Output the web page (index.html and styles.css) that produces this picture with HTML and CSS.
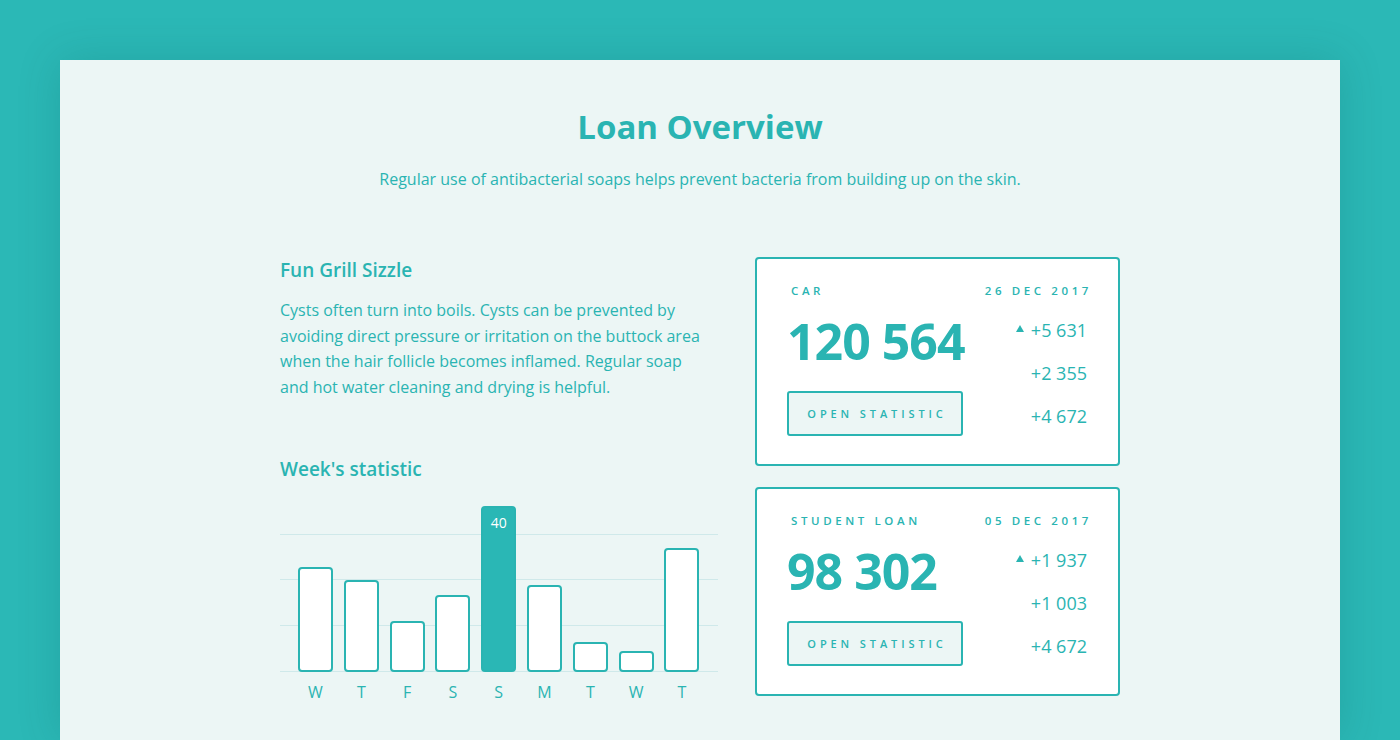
FILE: index.html
```html
<!DOCTYPE html>
<html>
<head>
<meta charset="utf-8">
<link rel="stylesheet" href="styles.css">
</head>
<body>
<div class="panel">
  <header class="head">
    <h1 class="title">Loan Overview</h1>
    <p class="subtitle">Regular use of antibacterial soaps helps prevent bacteria from building up on the skin.</p>
  </header>
  <div class="content">
    <div class="left">
      <h2 class="h2">Fun Grill Sizzle</h2>
      <p class="para">Cysts often turn into boils. Cysts can be prevented by avoiding direct pressure or irritation on the buttock area when the hair follicle becomes inflamed. Regular soap and hot water cleaning and drying is helpful.</p>
      <h2 class="h2 week">Week's statistic</h2>
      <div class="chart">
        <div class="grid">
          <div class="gl"></div><div class="gl"></div><div class="gl"></div><div class="gl"></div>
        </div>
        <div class="bars">
          <div class="col"><div class="bar" style="height:105px"></div><span class="day">W</span></div>
          <div class="col"><div class="bar" style="height:92px"></div><span class="day">T</span></div>
          <div class="col"><div class="bar" style="height:51px"></div><span class="day">F</span></div>
          <div class="col"><div class="bar" style="height:77px"></div><span class="day">S</span></div>
          <div class="col"><div class="bar active" style="height:166px"><span class="val">40</span></div><span class="day">S</span></div>
          <div class="col"><div class="bar" style="height:87px"></div><span class="day">M</span></div>
          <div class="col"><div class="bar" style="height:30px"></div><span class="day">T</span></div>
          <div class="col"><div class="bar" style="height:21px"></div><span class="day">W</span></div>
          <div class="col"><div class="bar" style="height:124px"></div><span class="day">T</span></div>
        </div>
      </div>
    </div>
    <div class="right">
      <div class="card">
        <div class="card-top">
          <span class="label">CAR</span>
          <span class="label">26 DEC 2017</span>
        </div>
        <div class="card-body">
          <div class="main">
            <div class="big">120 564</div>
            <button class="btn">OPEN STATISTIC</button>
          </div>
          <div class="side">
            <div class="delta"><span class="tri"></span>+5 631</div>
            <div class="delta">+2 355</div>
            <div class="delta">+4 672</div>
          </div>
        </div>
      </div>
      <div class="card">
        <div class="card-top">
          <span class="label">STUDENT LOAN</span>
          <span class="label">05 DEC 2017</span>
        </div>
        <div class="card-body">
          <div class="main">
            <div class="big">98 302</div>
            <button class="btn">OPEN STATISTIC</button>
          </div>
          <div class="side">
            <div class="delta"><span class="tri"></span>+1 937</div>
            <div class="delta">+1 003</div>
            <div class="delta">+4 672</div>
          </div>
        </div>
      </div>
    </div>
  </div>
</div>
</body>
</html>
```
FILE: styles.css
```css
* { box-sizing: border-box; }
html, body { margin: 0; padding: 0; }
body {
  background: #2bb8b6;
  width: 1400px;
  height: 740px;
  overflow: hidden;
  font-family: "Open Sans", "Noto Sans", sans-serif;
  color: #2ab4b2;
  padding: 60px 60px 0 60px;
}
.panel {
  background: #ecf6f5;
  height: 680px;
  box-shadow: 0 0 40px rgba(0, 80, 80, 0.18);
  padding-top: 44px;
}
.head { text-align: center; }
.title {
  margin: 0;
  font-size: 33px;
  font-weight: 700;
  line-height: 46px;
  color: #2ab4b2;
}
.subtitle {
  margin: 19px 0 0;
  font-size: 16px;
  line-height: 20px;
  color: #2ab4b2;
}
.content {
  display: flex;
  justify-content: center;
  gap: 37px;
  margin-top: 68px;
}
.left { width: 438px; }
.h2 {
  margin: 0;
  font-size: 19px;
  font-weight: 600;
  line-height: 26px;
  color: #2ab4b2;
}
.para {
  margin: 15px 0 0;
  max-width: 430px;
  font-size: 16px;
  line-height: 25.7px;
  color: #2ab4b2;
}
.week { margin-top: 55px; }
.chart {
  position: relative;
  margin-top: 12px;
  height: 220px;
}
.grid {
  position: absolute;
  left: 0; right: 0; top: 40px;
  height: 138px;
  display: flex;
  flex-direction: column;
  justify-content: space-between;
}
.gl { height: 1px; background: #cfe9ea; }
.bars {
  position: relative;
  display: flex;
  padding-left: 18px;
  gap: 10.8px;
  height: 178px;
  align-items: flex-end;
}
.col {
  width: 35px;
  height: 100%;
  display: flex;
  flex-direction: column;
  justify-content: flex-end;
  align-items: center;
  position: relative;
}
.bar {
  width: 35px;
  background: #fff;
  border: 2px solid #2ab4b2;
  border-radius: 4px;
  position: relative;
}
.bar.active {
  background: #2ab7b5;
  text-align: center;
}
.val {
  display: block;
  color: #fff;
  font-size: 14px;
  margin-top: 5px;
}
.day {
  position: absolute;
  top: 187px;
  font-size: 16px;
  color: #2ab4b2;
}
.right {
  width: 365px;
  display: flex;
  flex-direction: column;
  gap: 21px;
}
.card {
  background: #fff;
  border: 2px solid #2ab4b2;
  border-radius: 4px;
  height: 209px;
  padding: 25px 27px 0 30px;
}
.card-top {
  display: flex;
  justify-content: space-between;
  padding-left: 4px;
}
.label {
  font-size: 11.5px;
  font-weight: 600;
  letter-spacing: 3.6px;
  line-height: 14px;
  margin-right: -1px;
}
.card-body {
  display: flex;
  justify-content: space-between;
}
.main { display: flex; flex-direction: column; }
.big {
  font-size: 50px;
  font-weight: 700;
  line-height: 60px;
  margin-top: 13px;
  letter-spacing: -1px;
}
.btn {
  margin-top: 20px;
  width: 176px;
  height: 45px;
  border: 2px solid #2ab4b2;
  border-radius: 3px;
  background: #ecf6f5;
  color: #2ab4b2;
  font-family: inherit;
  font-size: 11px;
  font-weight: 600;
  letter-spacing: 3.9px;
  padding: 0 0 0 4px;
}
.side {
  display: flex;
  flex-direction: column;
  align-items: flex-end;
  padding-top: 21px;
  padding-right: 4px;
}
.delta {
  font-size: 18px;
  line-height: 22px;
  margin-bottom: 21px;
  font-weight: 500;
  display: flex;
  align-items: center;
}
.tri {
  width: 0; height: 0;
  border-left: 4px solid transparent;
  border-right: 4px solid transparent;
  border-bottom: 7px solid #2ab4b2;
  margin-right: 7px;
  margin-bottom: 3px;
}
```
